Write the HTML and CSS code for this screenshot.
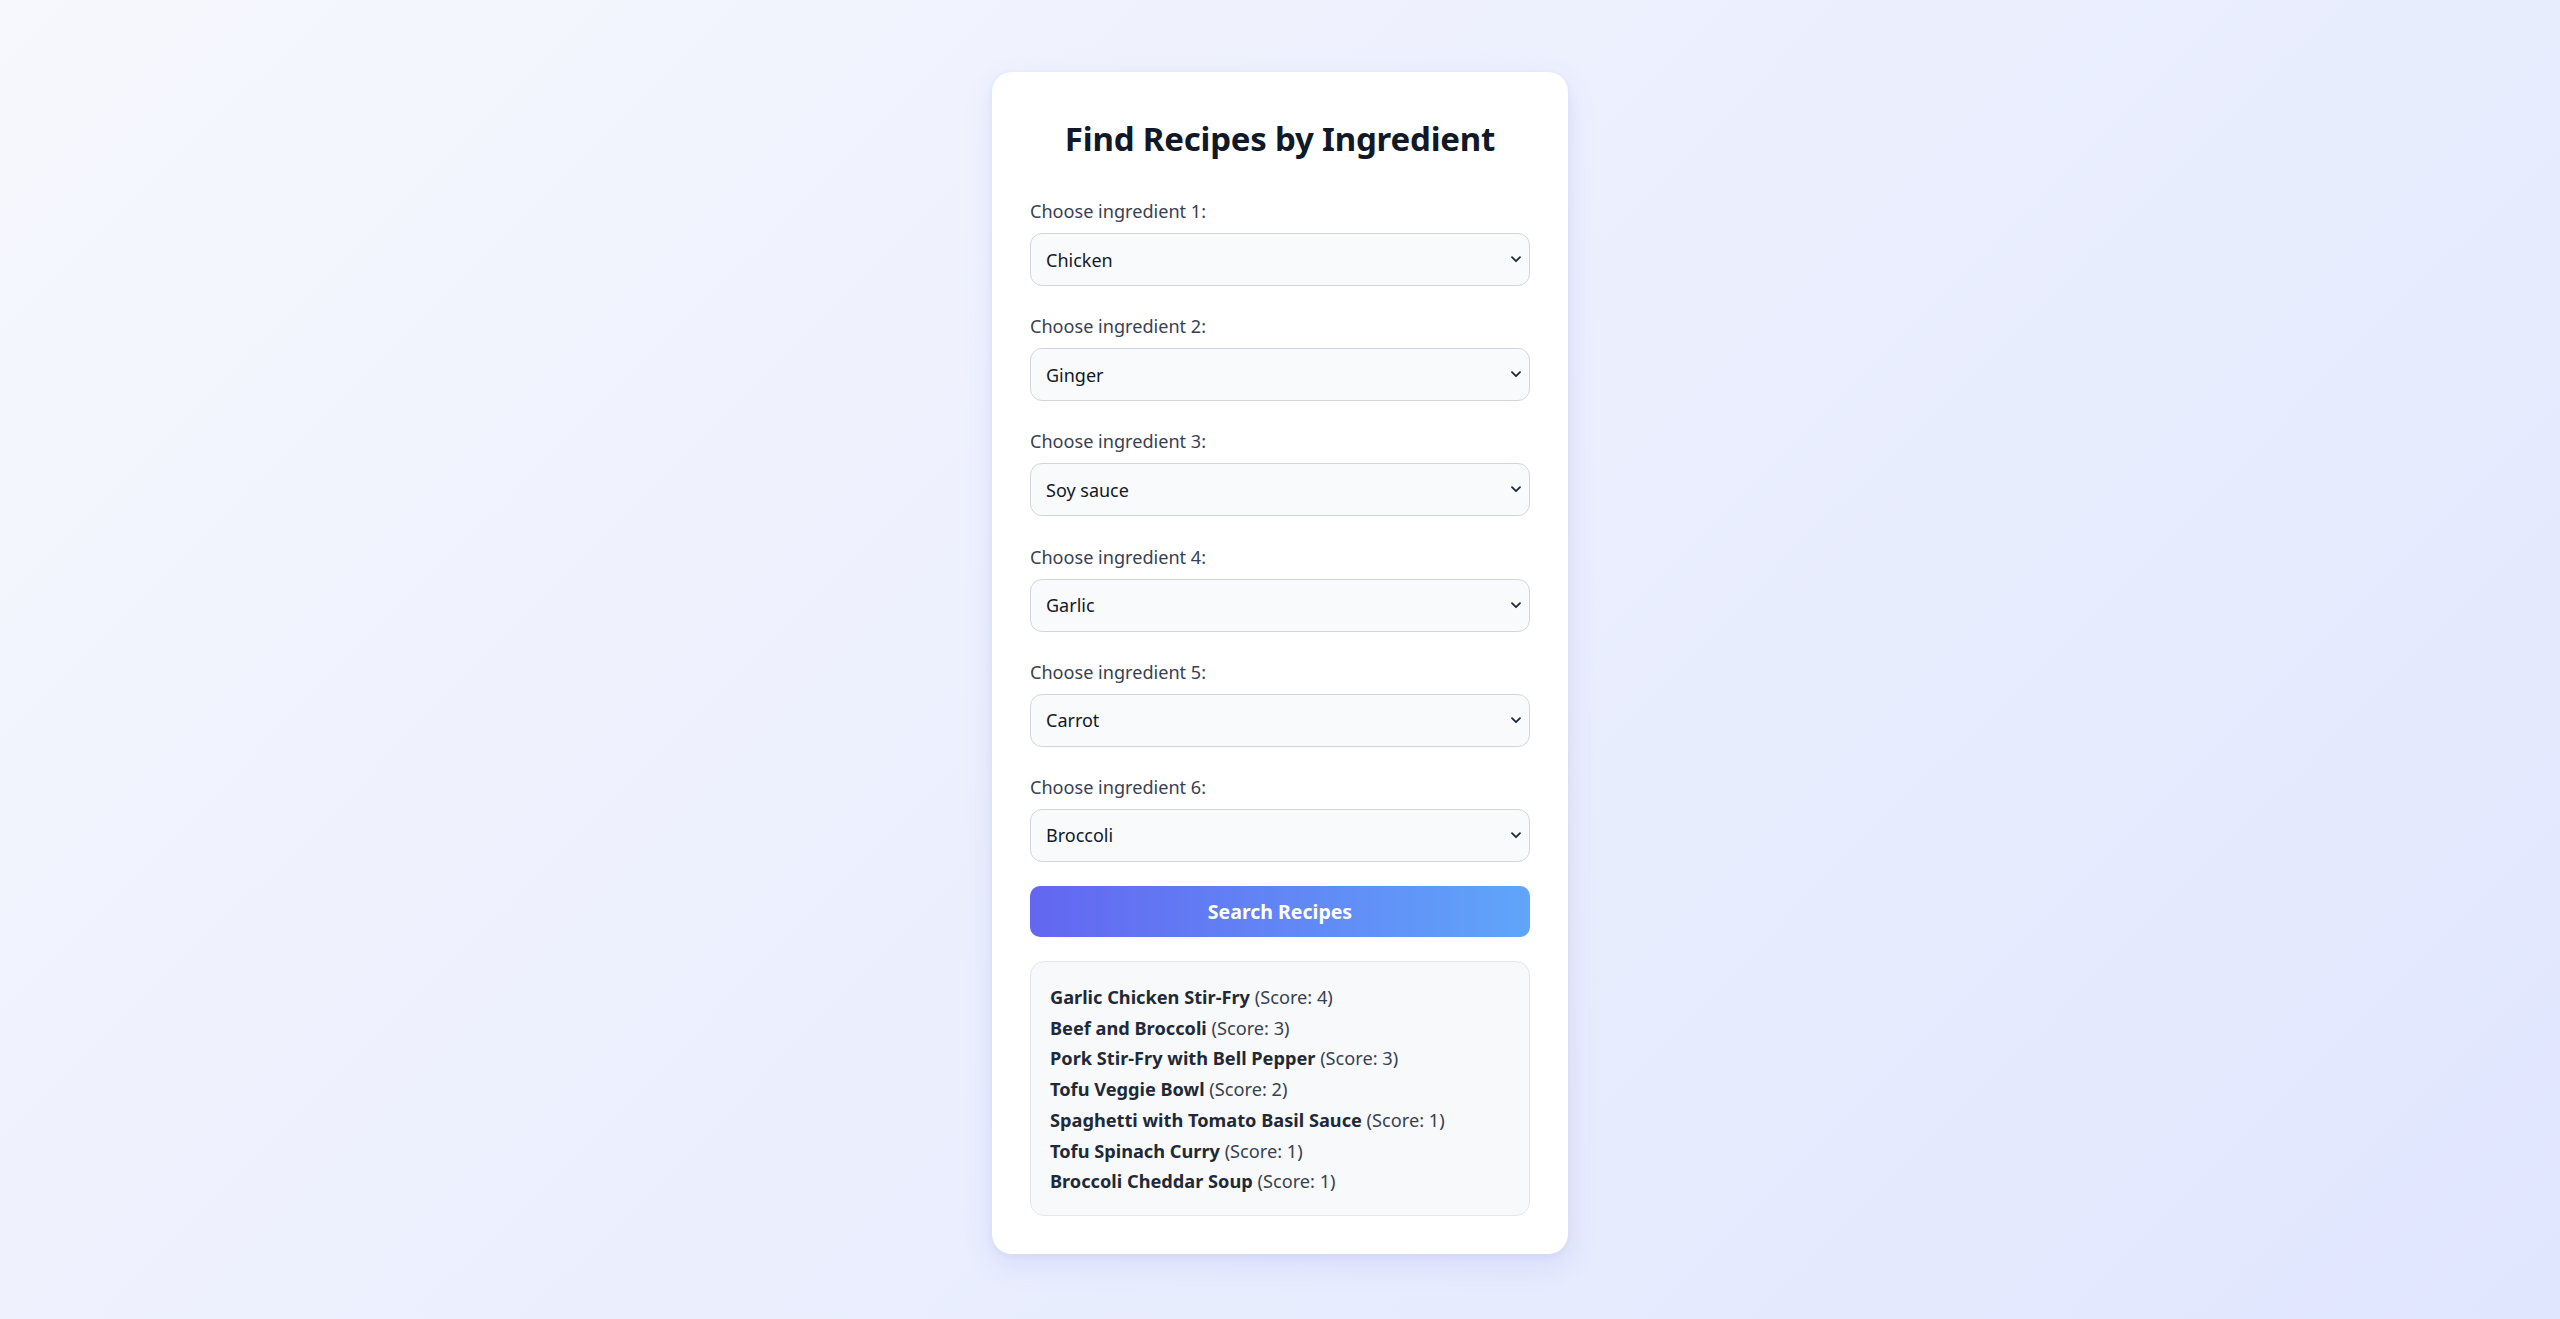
FILE: index.html
```html
<!DOCTYPE html>
<html lang="en">
<head>
<meta charset="utf-8">
<title>Find Recipes by Ingredient</title>
<link rel="stylesheet" href="styles.css">
</head>
<body>
<main class="card">
  <h1 class="title">Find Recipes by Ingredient</h1>
  <div class="field">
    <label class="label" for="i1">Choose ingredient 1:</label>
    <div class="select-wrap">
      <select id="i1" class="select"><option>Chicken</option></select>
      <svg class="chev" width="10" height="7" viewBox="0 0 10 7"><path d="M1 1.2 L5 5.2 L9 1.2" fill="none" stroke="#1f2937" stroke-width="1.8" stroke-linecap="round" stroke-linejoin="round"/></svg>
    </div>
  </div>
  <div class="field">
    <label class="label" for="i2">Choose ingredient 2:</label>
    <div class="select-wrap">
      <select id="i2" class="select"><option>Ginger</option></select>
      <svg class="chev" width="10" height="7" viewBox="0 0 10 7"><path d="M1 1.2 L5 5.2 L9 1.2" fill="none" stroke="#1f2937" stroke-width="1.8" stroke-linecap="round" stroke-linejoin="round"/></svg>
    </div>
  </div>
  <div class="field">
    <label class="label" for="i3">Choose ingredient 3:</label>
    <div class="select-wrap">
      <select id="i3" class="select"><option>Soy sauce</option></select>
      <svg class="chev" width="10" height="7" viewBox="0 0 10 7"><path d="M1 1.2 L5 5.2 L9 1.2" fill="none" stroke="#1f2937" stroke-width="1.8" stroke-linecap="round" stroke-linejoin="round"/></svg>
    </div>
  </div>
  <div class="field">
    <label class="label" for="i4">Choose ingredient 4:</label>
    <div class="select-wrap">
      <select id="i4" class="select"><option>Garlic</option></select>
      <svg class="chev" width="10" height="7" viewBox="0 0 10 7"><path d="M1 1.2 L5 5.2 L9 1.2" fill="none" stroke="#1f2937" stroke-width="1.8" stroke-linecap="round" stroke-linejoin="round"/></svg>
    </div>
  </div>
  <div class="field">
    <label class="label" for="i5">Choose ingredient 5:</label>
    <div class="select-wrap">
      <select id="i5" class="select"><option>Carrot</option></select>
      <svg class="chev" width="10" height="7" viewBox="0 0 10 7"><path d="M1 1.2 L5 5.2 L9 1.2" fill="none" stroke="#1f2937" stroke-width="1.8" stroke-linecap="round" stroke-linejoin="round"/></svg>
    </div>
  </div>
  <div class="field field-last">
    <label class="label" for="i6">Choose ingredient 6:</label>
    <div class="select-wrap">
      <select id="i6" class="select"><option>Broccoli</option></select>
      <svg class="chev" width="10" height="7" viewBox="0 0 10 7"><path d="M1 1.2 L5 5.2 L9 1.2" fill="none" stroke="#1f2937" stroke-width="1.8" stroke-linecap="round" stroke-linejoin="round"/></svg>
    </div>
  </div>
  <button class="btn" type="button">Search Recipes</button>
  <div class="results">
    <div class="row"><b>Garlic Chicken Stir-Fry</b> (Score: 4)</div>
    <div class="row"><b>Beef and Broccoli</b> (Score: 3)</div>
    <div class="row"><b>Pork Stir-Fry with Bell Pepper</b> (Score: 3)</div>
    <div class="row"><b>Tofu Veggie Bowl</b> (Score: 2)</div>
    <div class="row"><b>Spaghetti with Tomato Basil Sauce</b> (Score: 1)</div>
    <div class="row"><b>Tofu Spinach Curry</b> (Score: 1)</div>
    <div class="row"><b>Broccoli Cheddar Soup</b> (Score: 1)</div>
  </div>
</main>
</body>
</html>
```
FILE: styles.css
```css
* { box-sizing: border-box; }
html, body { height: 100%; }
body {
  margin: 0;
  font-family: "Noto Sans", "Open Sans", "DejaVu Sans", sans-serif;
  background: linear-gradient(135deg, #f6f8fd 0%, #e0e6fe 100%);
  color: #1f2937;
  display: flex;
  justify-content: center;
  align-items: flex-start;
}
.card {
  width: 576px;
  margin-top: 72px;
  background: #ffffff;
  border-radius: 20px;
  padding: 38px 38px 38px;
  box-shadow: 0 10px 30px rgba(99, 102, 241, 0.12), 0 2px 8px rgba(30, 41, 59, 0.05);
}
.title {
  margin: 10px 0 40px;
  font-size: 33px;
  line-height: 38px;
  font-weight: 700;
  text-align: center;
  color: #111827;
  letter-spacing: -0.2px;
}
.field { margin-bottom: 27.2px; }
.field-last { margin-bottom: 24px; }
.label {
  display: block;
  font-size: 18.1px;
  line-height: 26px;
  color: #374151;
  margin-bottom: 9px;
}
.select-wrap { position: relative; }
.select {
  display: block;
  width: 100%;
  height: 53px;
  appearance: none;
  -webkit-appearance: none;
  background: #f9fafb;
  border: 1px solid #d1d5db;
  border-radius: 12px;
  padding: 0 15px;
  font-family: inherit;
  font-size: 18px;
  color: #111827;
}
.chev {
  position: absolute;
  right: 9px;
  top: 23px;
  pointer-events: none;
}
.btn {
  display: block;
  width: 100%;
  height: 51px;
  border: none;
  border-radius: 10px;
  background: linear-gradient(90deg, #6366f1 0%, #60a5fa 100%);
  color: #ffffff;
  font-family: inherit;
  font-size: 19.5px;
  font-weight: 700;
  margin-bottom: 24px;
}
.results {
  background: #f8f9fb;
  border: 1px solid #e5e7eb;
  border-radius: 14px;
  padding: 20px 19px 18px;
  font-size: 18.2px;
  color: #374151;
}
.row { line-height: 30.75px; }
.row b { color: #1f2937; font-weight: 700; }
```
